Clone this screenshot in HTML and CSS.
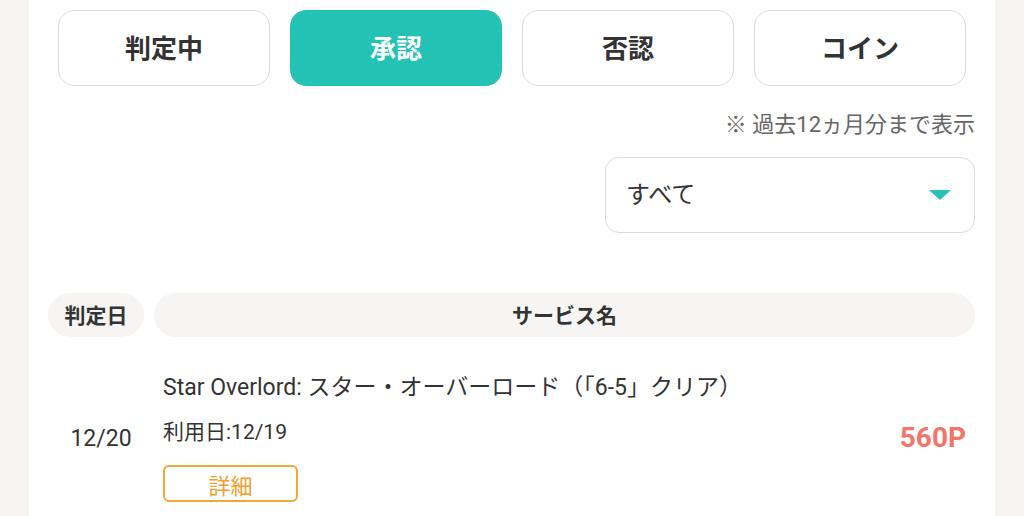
FILE: index.html
```html
<!DOCTYPE html>
<html lang="ja">
<head>
<meta charset="utf-8">
<link rel="stylesheet" href="styles.css">
</head>
<body>
<div class="page">
  <main class="content">
    <nav class="tabs">
      <div class="tab">判定中</div>
      <div class="tab active">承認</div>
      <div class="tab">否認</div>
      <div class="tab">コイン</div>
    </nav>
    <p class="note">※ 過去12ヵ月分まで表示</p>
    <div class="select-wrap">
      <div class="select">
        <span class="select-label">すべて</span>
        <svg class="caret" width="22" height="10" viewBox="0 0 22 10"><polygon points="0,0 22,0 11,10" fill="#24c2b5"/></svg>
      </div>
    </div>
    <div class="thead">
      <div class="th th-date">判定日</div>
      <div class="th th-name">サービス名</div>
    </div>
    <div class="row">
      <div class="cell-date">12/20</div>
      <div class="cell-main">
        <div class="title">Star Overlord: スター・オーバーロード（「6-5」クリア）</div>
        <div class="used">利用日:12/19</div>
        <div class="detail">詳細</div>
      </div>
      <div class="amount">560P</div>
    </div>
  </main>
</div>
</body>
</html>
```

FILE: styles.css
```css
* { box-sizing: border-box; }
html, body { margin: 0; padding: 0; }
body {
  background: #f6f5f3;
  font-family: Roboto, "Noto Sans CJK JP", sans-serif;
  color: #333;
  overflow: hidden;
}
.page {
  width: 1024px;
  height: 516px;
  padding: 0 29px;
}
.content {
  background: #fff;
  height: 516px;
  padding: 10px 20px 0 19px;
}
.tabs {
  display: grid;
  grid-template-columns: repeat(4, 212px);
  gap: 20px;
  margin: 0 9px 0 10px;
}
.tab {
  height: 76px;
  border: 1.5px solid #dcdcdc;
  border-radius: 16px;
  display: flex;
  align-items: center;
  justify-content: center;
  padding-bottom: 4px;
  font-size: 26px;
  font-weight: 700;
  color: #333;
  background: #fff;
}
.tab.active {
  background: #24c2b5;
  border-color: #24c2b5;
  color: #fff;
}
.note {
  margin: 24px 0 0;
  text-align: right;
  font-size: 22px;
  line-height: 30px;
  color: #666;
}
.select-wrap {
  display: flex;
  justify-content: flex-end;
  margin-top: 17px;
}
.select {
  width: 370px;
  height: 76px;
  border: 1.5px solid #dcdcdc;
  border-radius: 14px;
  display: flex;
  align-items: center;
  justify-content: space-between;
  padding: 0 23px 0 20px;
  font-size: 24px;
  color: #333;
}
.select-label { padding-bottom: 6px; }
.caret { display: block; }
.thead {
  display: flex;
  gap: 10px;
  margin-top: 60px;
  height: 44px;
}
.th {
  background: #f6f5f3;
  border-radius: 22px;
  display: flex;
  align-items: center;
  justify-content: center;
  padding-bottom: 2px;
  font-size: 21px;
  font-weight: 700;
  color: #333;
}
.th-date { width: 96px; }
.th-name { flex: 1; }
.row {
  display: flex;
  align-items: center;
  padding: 35px 9px 0 0;
}
.cell-date {
  width: 106px;
  text-align: center;
  font-size: 23px;
  color: #333;
  padding-top: 2px;
}
.cell-main {
  flex: 1;
  padding-left: 9px;
}
.title {
  font-size: 23px;
  line-height: 32px;
  color: #333;
}
.used {
  margin-top: 14px;
  font-size: 21px;
  line-height: 28px;
  color: #333;
}
.detail {
  margin-top: 19px;
  width: 135px;
  height: 37px;
  border: 2px solid #f0a838;
  border-radius: 6px;
  color: #f0a030;
  font-size: 22px;
  display: flex;
  align-items: center;
  justify-content: center;
}
.amount {
  font-size: 28px;
  font-weight: 700;
  color: #f2756a;
}
```
